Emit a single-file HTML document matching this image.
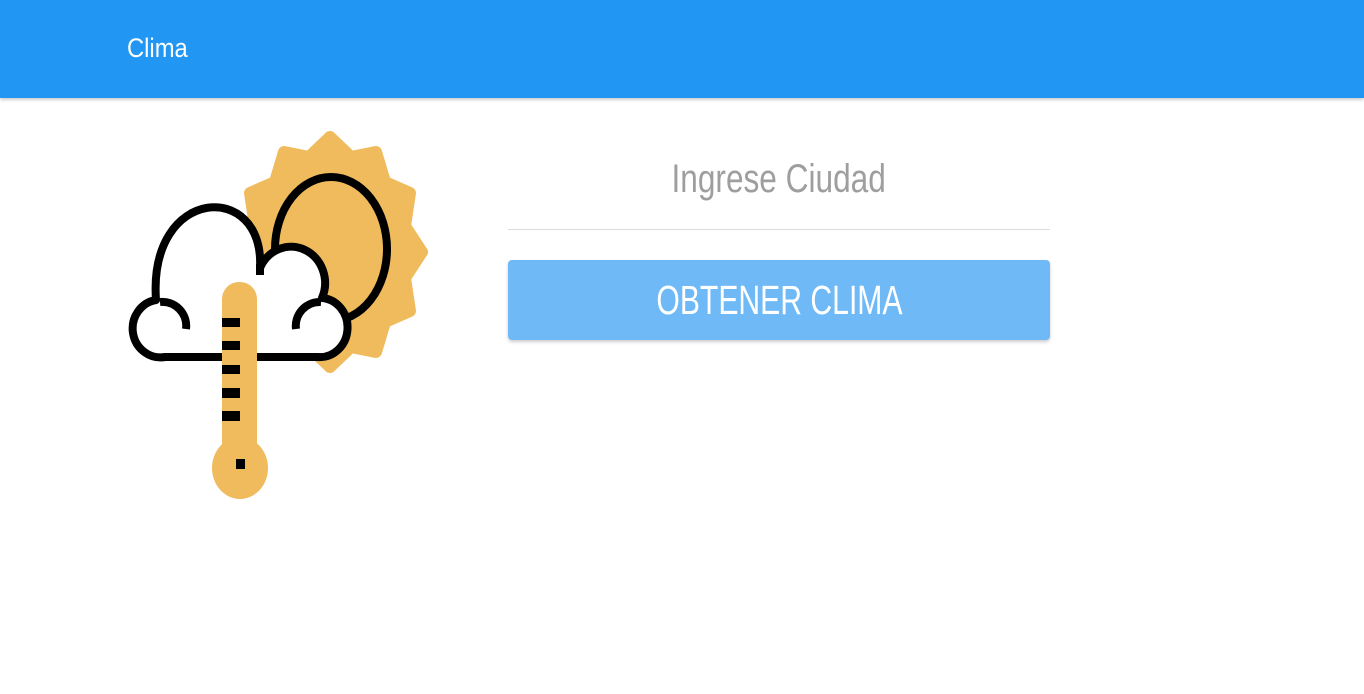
<!DOCTYPE html>
<html><head><meta charset="utf-8"><style>
html,body{margin:0;padding:0;width:1364px;height:694px;background:#fff;overflow:hidden;font-family:"Liberation Sans",sans-serif;}
.hdr{position:absolute;left:0;top:0;width:1364px;height:98px;background:#2196f3;box-shadow:0 2px 3px rgba(0,0,0,.2);}
.hdr span{position:absolute;left:127px;top:32px;font-size:27px;color:#fff;line-height:32px;transform:scaleX(.88);transform-origin:0 0;}
.ph{position:absolute;left:508px;width:542px;top:156px;text-align:center;font-size:40px;line-height:46px;color:#9e9e9e;}
.ph span,.btn span{display:inline-block;}
.ph span{transform:scaleX(.79);}
.line{position:absolute;left:508px;top:229px;width:542px;height:1px;background:#dcdcdc;}
.btn{position:absolute;left:508px;top:260px;width:542px;height:80px;background:#6fbaf6;border-radius:4px;box-shadow:0 2px 3px rgba(0,0,0,.2);color:#fff;text-align:center;font-size:41px;line-height:80px;}
.btn span{transform:scaleX(.735);}
svg{position:absolute;left:0;top:0;}
</style></head><body>
<div class="hdr"><span>Clima</span></div>
<svg width="1364" height="694">
<polygon fill="#f0bb5c" stroke="#f0bb5c" stroke-width="12" stroke-linejoin="round" points="422,252 405,226 410,193 385,182 376,152 351,157 330,137 309,157 284,152 275,182 250,193 255,226 238,252 255,278 250,311 275,322 284,352 309,347 330,367 351,347 376,352 385,322 410,311 405,278"/>
<ellipse cx="331" cy="249" rx="56" ry="72" fill="#f0bb5c" stroke="#000" stroke-width="8"/>
<path d="M165 357 A27 28 0 0 1 156 300 C148 185 265 180 260 268 A31 33 0 0 1 322 298 A27 29 0 0 1 318 357 Z" fill="#fff" stroke="#000" stroke-width="8" stroke-linejoin="round"/>
<path d="M186 329 A24 24 0 0 0 160 302 M296 329 A24 24 0 0 1 321 302 M260 264 L260 275" fill="none" stroke="#000" stroke-width="8"/>
<rect x="222" y="282" width="35" height="190" rx="17" fill="#f0bb5c"/>
<ellipse cx="240" cy="468" rx="28" ry="31" fill="#f0bb5c"/>
<g fill="#000"><rect x="222" y="318" width="18" height="9"/><rect x="222" y="341" width="18" height="9"/><rect x="222" y="365" width="18" height="9"/><rect x="222" y="388" width="18" height="10"/><rect x="222" y="411" width="18" height="10"/><rect x="236" y="459" width="9" height="10"/></g>
</svg>
<div class="ph"><span>Ingrese Ciudad</span></div>
<div class="line"></div>
<div class="btn"><span>OBTENER CLIMA</span></div>
</body></html>
